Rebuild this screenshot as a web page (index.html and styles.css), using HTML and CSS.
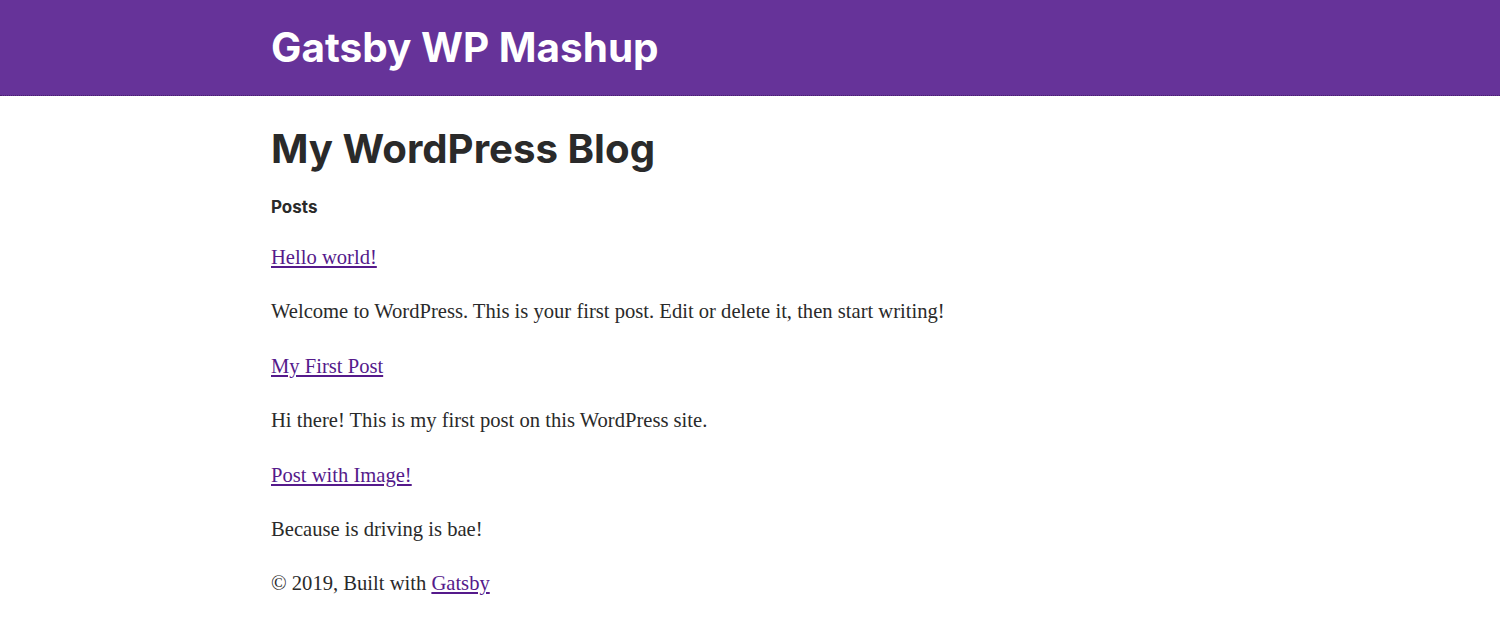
FILE: index.html
```html
<!DOCTYPE html>
<html>
<head>
<meta charset="utf-8">
<link rel="stylesheet" href="styles.css">
</head>
<body>
<header class="site-header">
  <div class="wrap">
    <h1 class="site-title"><a href="#">Gatsby WP Mashup</a></h1>
  </div>
</header>
<main class="wrap content">
  <h1 class="page-title">My WordPress Blog</h1>
  <h4 class="section-title">Posts</h4>
  <p class="post-link"><a href="#">Hello world!</a></p>
  <p>Welcome to WordPress. This is your first post. Edit or delete it, then start writing!</p>
  <p class="post-link"><a href="#">My First Post</a></p>
  <p>Hi there! This is my first post on this WordPress site.</p>
  <p class="post-link"><a href="#">Post with Image!</a></p>
  <p>Because is driving is bae!</p>
  <footer class="site-footer">© 2019, Built with <a href="#">Gatsby</a></footer>
</main>
</body>
</html>
```
FILE: styles.css
```css
html, body {
  margin: 0;
  padding: 0;
  background: #fff;
}
body {
  font-family: "Liberation Serif", serif;
  font-size: 20.6px;
  line-height: 27px;
  color: #2a2a2a;
}
.wrap {
  width: 958px;
  margin: 0 auto;
}
.site-header {
  background: #663399;
  height: 96px;
  border-bottom: 1px dotted #4a2070;
  box-sizing: border-box;
}
.site-header .wrap {
  padding-top: 23px;
}
.site-title {
  margin: 0;
  font-family: Inter, "Liberation Sans", sans-serif;
  font-weight: 700;
  font-size: 40.5px;
  line-height: 50px;
}
.site-title a {
  color: #fff;
  text-decoration: none;
}
.content {
  padding-top: 25px;
}
.page-title {
  margin: 0 0 18px;
  font-family: Inter, "Liberation Sans", sans-serif;
  font-weight: 700;
  font-size: 40.2px;
  line-height: 56px;
  color: #2a2a2a;
}
.section-title {
  margin: 0 0 25px;
  font-family: Inter, "Liberation Sans", sans-serif;
  font-weight: 700;
  font-size: 17px;
  line-height: 24px;
  color: #2a2a2a;
}
p {
  margin: 0 0 27.4px;
}
a {
  color: #551a8b;
}
.site-footer {
  margin: 0;
}
```
